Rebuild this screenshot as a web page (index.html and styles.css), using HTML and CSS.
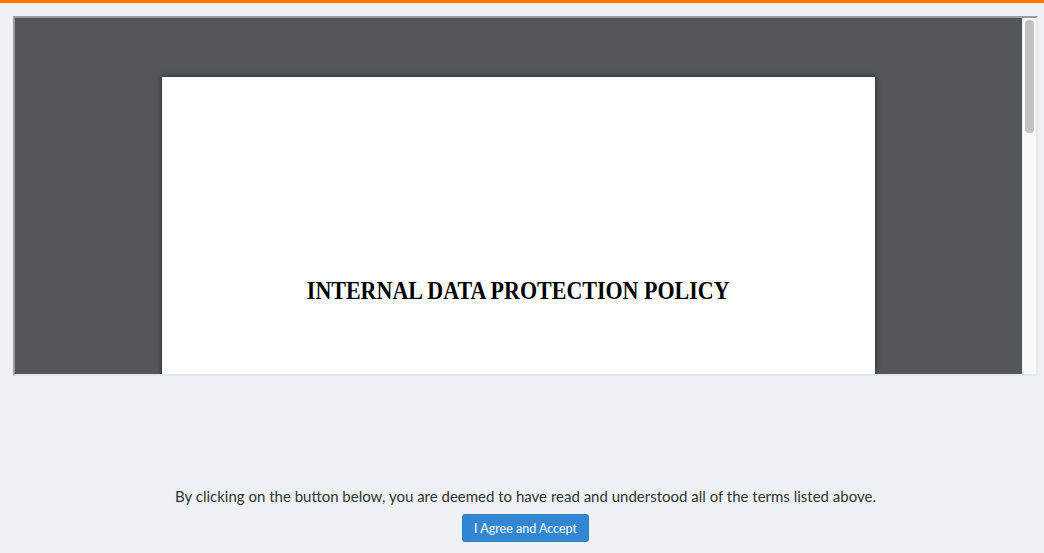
FILE: index.html
```html
<!DOCTYPE html>
<html lang="en">
<head>
<meta charset="utf-8">
<title>Policy</title>
<link rel="stylesheet" href="styles.css">
</head>
<body>
<div class="topbar"></div>
<main class="content">
  <div class="frame">
    <div class="viewer">
      <div class="page">
        <h1 class="doc-title">INTERNAL DATA PROTECTION POLICY</h1>
      </div>
    </div>
    <div class="scrollbar"><div class="thumb"></div></div>
  </div>
  <section class="accept">
    <p class="notice">By clicking on the button below, you are deemed to have read and understood all of the terms listed above.</p>
    <button class="btn" type="button">I Agree and Accept</button>
  </section>
</main>
</body>
</html>
```
FILE: styles.css
```css
html, body {
  margin: 0;
  padding: 0;
  background: #eef2f6;
  height: 100%;
  overflow: hidden;
}
body {
  font-family: "Lato", "Noto Sans", sans-serif;
  color: #333;
}
.topbar {
  height: 3px;
  background: #ff7300;
}
.content {
  padding: 13px 6px 0 13px;
}
.frame {
  display: flex;
  height: 356px;
  border-style: solid;
  border-width: 2px;
  border-color: #9a9c9d #e4e8eb #e4e8eb #9a9c9d;
  overflow: hidden;
}
.viewer {
  flex: 1;
  background: #535759;
  display: flex;
  justify-content: center;
  align-items: flex-start;
  padding-top: 59px;
  overflow: hidden;
}
.page {
  width: 713px;
  height: 600px;
  background: #fff;
  box-shadow: 0 0 5px rgba(0, 0, 0, 0.6);
  display: flex;
  flex-direction: column;
  align-items: center;
  flex-shrink: 0;
}
.doc-title {
  margin: 199px 0 0;
  font-family: "Liberation Serif", serif;
  font-weight: bold;
  font-size: 25px;
  line-height: 30px;
  color: #000;
  transform: scaleX(0.88);
  white-space: nowrap;
}
.scrollbar {
  width: 14px;
  background: #f9f9f9;
  border-left: 1px solid #ececec;
  padding: 2px 2px;
  box-sizing: border-box;
}
.thumb {
  height: 113px;
  background: #c1c1c1;
  border-radius: 4px;
}
.accept {
  display: flex;
  flex-direction: column;
  align-items: center;
  padding-top: 110px;
}
.notice {
  margin: 0;
  font-size: 15px;
  line-height: 20px;
  color: #333;
}
.btn {
  margin-top: 8px;
  height: 28px;
  padding: 0 11px;
  border: 1px solid #2f7fc5;
  border-radius: 3px;
  background: #3386d1;
  color: #fff;
  font-family: "Lato", "Noto Sans", sans-serif;
  font-size: 12.5px;
}
```
